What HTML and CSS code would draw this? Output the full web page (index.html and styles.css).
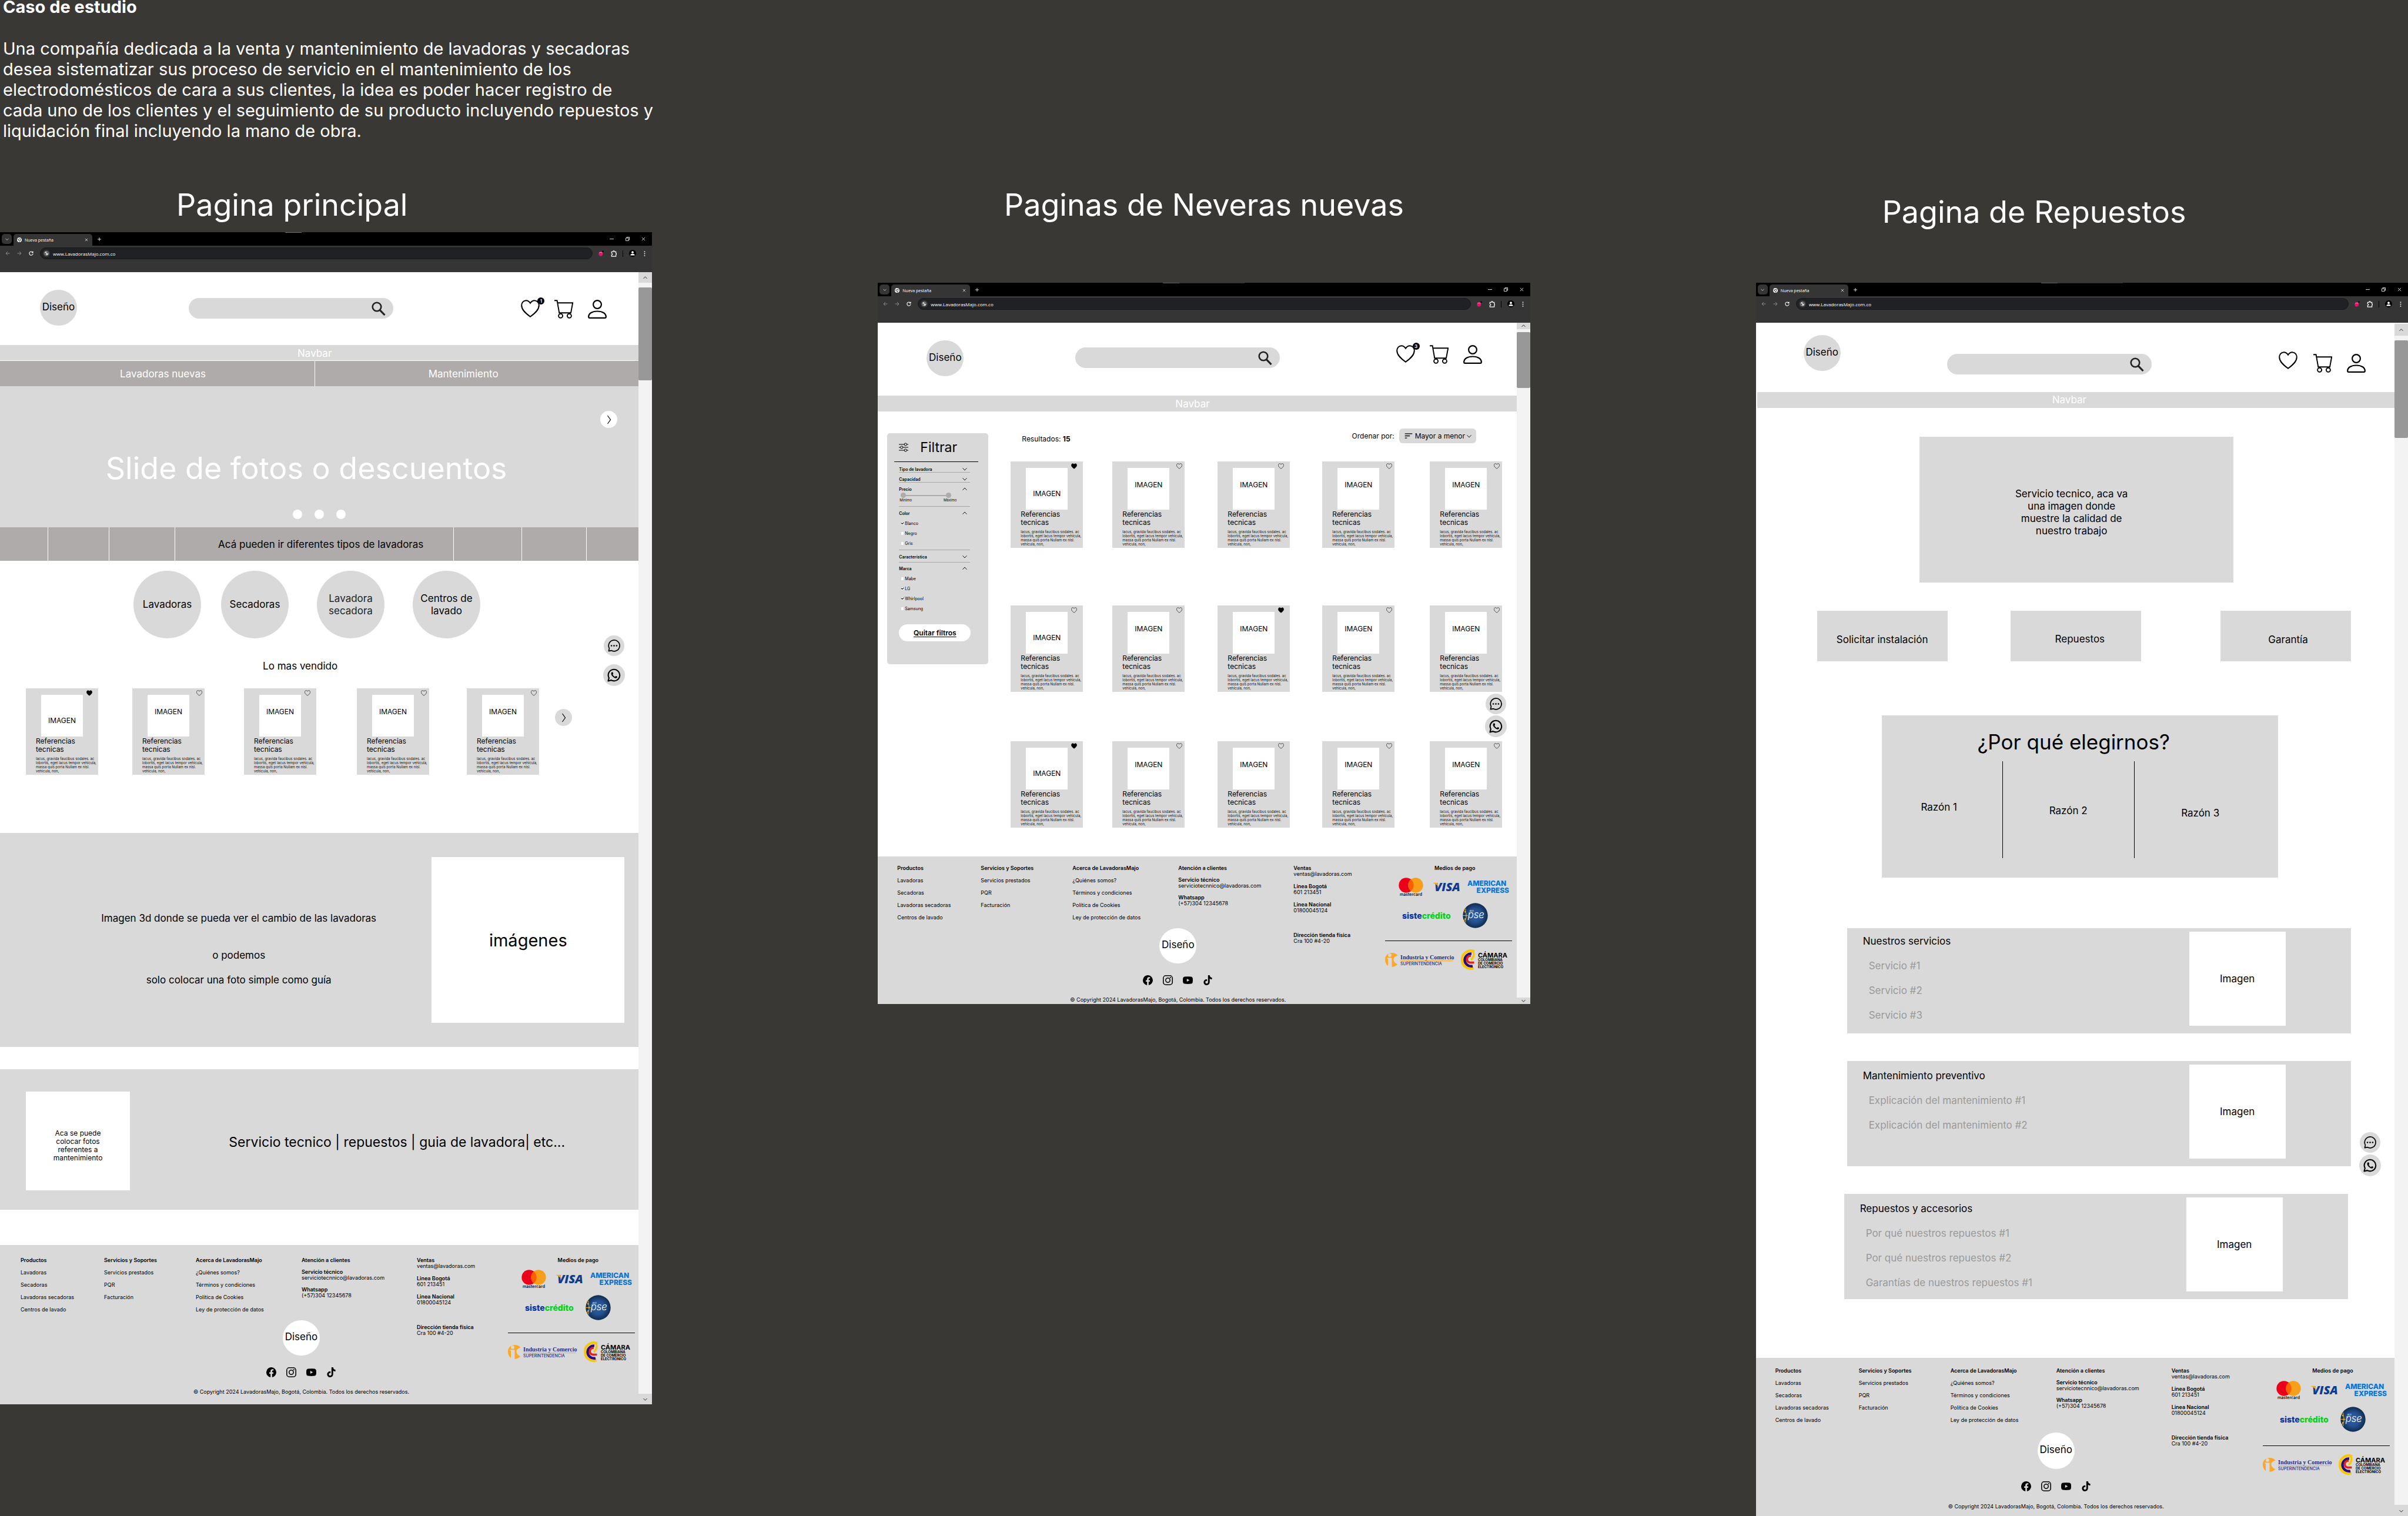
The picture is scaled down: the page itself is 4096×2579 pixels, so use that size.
FILE: index.html
```html
<!DOCTYPE html>
<html lang="es">
<head>
<meta charset="utf-8">
<title>LavadorasMajo - wireframes</title>
<link rel="stylesheet" href="styles.css">
</head>
<body>
<svg class="sprite" aria-hidden="true">
  <defs>
    <radialGradient id="pse-fill"><stop offset="0" stop-color="#2f62b5"/><stop offset="0.55" stop-color="#24508f"/><stop offset="1" stop-color="#0f2c4d"/></radialGradient>
  </defs>
  <symbol id="i-heart" viewBox="0 0 32 30"><path d="M16 5.6C14 2.6 11.6 1.2 8.9 1.2C4.5 1.2 1.2 4.9 1.2 9.6C1.2 17.2 8 23 16 28.8C24 23 30.8 17.2 30.8 9.6C30.8 4.9 27.500 1.2 23.100 1.2C20.400 1.2 18 2.6 16 5.6Z" stroke="currentColor" stroke-width="2"/></symbol>
  <symbol id="i-cart" viewBox="0 0 32 32"><path d="M0 1.300H4.600L8.300 22.200H28L31.200 5.300H5.600" fill="none" stroke="currentColor" stroke-width="1.900"/><circle cx="10.600" cy="27.300" r="3.500" fill="none" stroke="currentColor" stroke-width="1.900"/><circle cx="25.400" cy="27.300" r="3.500" fill="none" stroke="currentColor" stroke-width="1.900"/></symbol>
  <symbol id="i-user" viewBox="0 0 32 32"><circle cx="16" cy="8" r="6.900" fill="none" stroke="currentColor" stroke-width="2.200"/><path d="M1.200 29C1.200 23 7.500 19.500 16 19.500S30.800 23 30.800 29Q30.800 30.800 29 30.800H3Q1.200 30.800 1.200 29Z" fill="none" stroke="currentColor" stroke-width="2.200"/></symbol>
  <symbol id="i-search" viewBox="0 0 24 24"><circle cx="9" cy="9" r="7.300" fill="none" stroke="currentColor" stroke-width="2.600"/><path d="M13.800 14.200L22.500 23" stroke="currentColor" stroke-width="3.200"/></symbol>
  <symbol id="i-right" viewBox="0 0 16 16"><path d="M5.500 1L10.500 8L5.500 15" fill="none" stroke="currentColor" stroke-width="1.200"/></symbol>
  <symbol id="i-down" viewBox="0 0 16 16"><path d="M1 4.500L8 12L15 4.500" fill="none" stroke="currentColor" stroke-width="1.800"/></symbol>
  <symbol id="i-up" viewBox="0 0 16 16"><path d="M1 11.500L8 4L15 11.500" fill="none" stroke="currentColor" stroke-width="1.800"/></symbol>
  <symbol id="i-chat" viewBox="0 0 24 24"><path d="M2.500 21.500L3.600 16.600A9.800 9.800 0 1 1 7.600 20.500Z" fill="none" stroke="currentColor" stroke-width="1.800" stroke-linejoin="round"/><circle cx="7.400" cy="12" r="1.400"/><circle cx="12" cy="12" r="1.400"/><circle cx="16.600" cy="12" r="1.400"/></symbol>
  <symbol id="i-whatsapp" viewBox="0 0 24 24"><path d="M1.500 22.500L3 17A10.200 10.200 0 1 1 7 21Z" fill="none" stroke="currentColor" stroke-width="2.200" stroke-linejoin="round"/><path d="M8.600 6.600C8.100 6.600 6.800 7.500 6.800 9.300C6.800 11.200 8.300 13.200 9.700 14.600C11.400 16.300 13.500 17.400 15 17.400C16.700 17.400 17.800 16.200 17.800 15.100C17.800 14.700 15.600 13.500 15.200 13.600C14.800 13.700 14.200 15 13.800 15C13 15 9.900 12.300 9.700 11.200C9.700 10.800 10.600 10.200 10.600 9.700C10.600 9.100 9.900 6.700 9.300 6.600Z"/></symbol>
  <symbol id="i-filter" viewBox="0 0 16 16"><g fill="none" stroke="currentColor" stroke-width="1"><path d="M0 3H9M13.500 3H16M0 8H2.500M7 8H16M0 13H9M13.500 13H16"/><circle cx="11.300" cy="3" r="2.100"/><circle cx="4.700" cy="8" r="2.100"/><circle cx="11.300" cy="13" r="2.100"/></g></symbol>
  <symbol id="i-sort" viewBox="0 0 14 10"><path d="M0 1H14M0 5H9.500M0 9H4" stroke="currentColor" stroke-width="1.400"/></symbol>
  <symbol id="i-facebook" viewBox="0 0 24 24"><path d="M24 12A12 12 0 1 0 10.100 23.900V15.500H7.100V12H10.100V9.400C10.100 6.400 11.900 4.700 14.700 4.700C16 4.700 17.300 4.900 17.300 4.900V7.900H15.800C14.300 7.900 13.900 8.800 13.900 9.700V12H17.200L16.700 15.500H13.900V23.900A12 12 0 0 0 24 12Z"/></symbol>
  <symbol id="i-instagram" viewBox="0 0 24 24"><g fill="none" stroke="currentColor" stroke-width="2.200"><rect x="1.100" y="1.100" width="21.800" height="21.800" rx="6"/><circle cx="12" cy="12" r="5.200"/></g><circle cx="18.200" cy="5.800" r="1.500"/></symbol>
  <symbol id="i-youtube" viewBox="0 0 24 24"><path fill-rule="evenodd" d="M4 3.500Q12 2.500 20 3.500Q23.300 4 23.700 7.500Q24.200 12 23.700 16.500Q23.300 20 20 20.500Q12 21.500 4 20.500Q.7 20 .3 16.500Q-.2 12 .3 7.500Q.7 4 4 3.500ZM9.600 8.300V15.700L16 12Z"/></symbol>
  <symbol id="i-tiktok" viewBox="0 0 24 24"><path d="M12.500 0H16.500C16.800 3.300 18.900 5.600 22 5.900V9.900C19.900 9.900 18 9.200 16.500 8.100V16.300C16.500 21 13.300 24 9.200 24C5 24 2 20.800 2 16.900C2 12.500 5.600 9.500 10.200 9.900V14C8 13.500 6.100 14.800 6.100 16.900C6.100 18.700 7.500 20 9.200 20C11.200 20 12.500 18.700 12.500 16.500Z"/></symbol>
  <symbol id="i-chrome" viewBox="0 0 16 16"><circle cx="8" cy="8" r="8" fill="#fff"/><circle cx="8" cy="8" r="3.400" fill="#fff" stroke="#353535" stroke-width="1.600"/><path d="M8 4.200H15M4.700 9.900L1.400 4.200M11.300 9.900L7.800 16" stroke="#353535" stroke-width="1.300"/></symbol>
  <symbol id="i-globe" viewBox="0 0 16 16"><circle cx="8" cy="8" r="7" fill="#c7c7c7"/><path d="M2 6L6 8.500L6.500 14L2.500 11ZM9 2L13 4L14 8L10.500 7L8 5Z" fill="#3c3c3c"/></symbol>
  <symbol id="i-back" viewBox="0 0 16 16"><path d="M15 8H2M8 2L2 8L8 14" fill="none" stroke="currentColor" stroke-width="2"/></symbol>
  <symbol id="i-forward" viewBox="0 0 16 16"><path d="M1 8H14M8 2L14 8L8 14" fill="none" stroke="currentColor" stroke-width="2"/></symbol>
  <symbol id="i-reload" viewBox="0 0 16 16"><path d="M13.500 5A6.300 6.300 0 1 0 14.300 9M14 1V5.500H9.500" fill="none" stroke="currentColor" stroke-width="2.200"/></symbol>
  <symbol id="i-close" viewBox="0 0 16 16"><path d="M2 2L14 14M14 2L2 14" stroke="currentColor" stroke-width="1.800"/></symbol>
  <symbol id="i-plus" viewBox="0 0 16 16"><path d="M8 0V16M0 8H16" stroke="currentColor" stroke-width="2.200"/></symbol>
  <symbol id="i-minimize" viewBox="0 0 16 16"><path d="M0 8H16" stroke="currentColor" stroke-width="1.800"/></symbol>
  <symbol id="i-restore" viewBox="0 0 16 16"><path d="M1 4.500H11.500V15H1ZM4.500 4V1H15V11.500H12" fill="none" stroke="currentColor" stroke-width="1.900"/></symbol>
  <symbol id="i-puzzle" viewBox="0 0 16 18"><path d="M2 4H6Q6 1.200 8 1.200Q10 1.200 10 4H14V8Q15.500 8.200 15.500 10Q15.500 11.800 14 12V16.500H2V12.500Q4.500 12 4.500 10.200Q4.500 8.400 2 8Z" fill="none" stroke="currentColor" stroke-width="2"/></symbol>
  <symbol id="i-pink" viewBox="0 0 16 18"><path d="M7 4C11 3 13 6 13 10C13 15 10 17.500 6.500 17.500C2.500 17.500 0 14 .500 10C1 6.500 3.500 5 7 4Z" fill="#e0156b"/><path d="M2 8Q6 3.500 11 8" stroke="#f77fb2" stroke-width="2" fill="none"/><circle cx="13.500" cy="3" r="2.300" fill="#000"/></symbol>
  <symbol id="i-avatar" viewBox="0 0 16 16"><circle cx="8" cy="8" r="8" fill="#000"/><circle cx="8" cy="5.500" r="2.500" fill="#fff"/><path d="M3 12.500Q3 8.900 8 8.900T13 12.500Z" fill="#fff"/></symbol>
  <symbol id="i-dots" viewBox="0 0 4 16"><circle cx="2" cy="2" r="1.600"/><circle cx="2" cy="8" r="1.600"/><circle cx="2" cy="14" r="1.600"/></symbol>
</svg>

<template id="part-chrome">
  <div class="tabs">
    <button class="tab-search" aria-label="Buscar pestañas"><svg><use href="#i-down"/></svg></button>
    <div class="tab"><svg class="tab-icon"><use href="#i-chrome"/></svg><span>Nueva pestaña</span><button aria-label="Cerrar pestaña"><svg><use href="#i-close"/></svg></button></div>
    <button class="tab-new" aria-label="Nueva pestaña"><svg><use href="#i-plus"/></svg></button>
    <div class="window-buttons">
      <button aria-label="Minimizar"><svg><use href="#i-minimize"/></svg></button>
      <button aria-label="Restaurar"><svg><use href="#i-restore"/></svg></button>
      <button aria-label="Cerrar"><svg><use href="#i-close"/></svg></button>
    </div>
  </div>
  <div class="toolbar">
    <button class="nav-off" aria-label="Atrás"><svg><use href="#i-back"/></svg></button>
    <button class="nav-off" aria-label="Adelante"><svg><use href="#i-forward"/></svg></button>
    <button aria-label="Recargar"><svg><use href="#i-reload"/></svg></button>
    <div class="address"><span class="site"><svg><use href="#i-globe"/></svg></span><input type="text" value="www.LavadorasMajo.com.co" aria-label="Dirección"></div>
    <div class="extensions">
      <svg class="ext-pink"><use href="#i-pink"/></svg>
      <svg class="ext-puzzle"><use href="#i-puzzle"/></svg>
      <i></i>
      <svg class="ext-avatar"><use href="#i-avatar"/></svg>
      <svg class="ext-dots"><use href="#i-dots"/></svg>
    </div>
  </div>
</template>

<template id="part-header">
  <a class="logo" href="#">Diseño</a>
  <label class="search"><input type="search" aria-label="Buscar"><svg><use href="#i-search"/></svg></label>
  <nav class="account" aria-label="Cuenta">
    <a class="favorites" href="#" aria-label="Favoritos"><svg><use href="#i-heart"/></svg></a>
    <a href="#" aria-label="Carrito"><svg><use href="#i-cart"/></svg></a>
    <a href="#" aria-label="Perfil"><svg><use href="#i-user"/></svg></a>
  </nav>
</template>

<template id="part-scrollbar">
  <button aria-label="Subir"><svg><use href="#i-up"/></svg></button>
  <span class="thumb"></span>
  <button aria-label="Bajar"><svg><use href="#i-down"/></svg></button>
</template>

<template id="part-card">
  <button class="like" aria-label="Favorito"><svg><use href="#i-heart"/></svg></button>
  <div class="photo">IMAGEN</div>
  <h3>Referencias tecnicas</h3>
  <p>lacus, gravida faucibus sodales. ac lobortis, eget lacus tempor vehicula, massa quis porta Nullam ex nisl. vehicula, non,</p>
</template>

<template id="part-contact">
  <a class="chat" href="#" aria-label="Chat"><svg><use href="#i-chat"/></svg></a>
  <a class="whatsapp" href="#" aria-label="WhatsApp"><svg><use href="#i-whatsapp"/></svg></a>
</template>

<template id="part-footer">
  <ul><li><b>Productos</b></li><li><a href="#">Lavadoras</a></li><li><a href="#">Secadoras</a></li><li><a href="#">Lavadoras secadoras</a></li><li><a href="#">Centros de lavado</a></li></ul>
  <ul><li><b>Servicios y Soportes</b></li><li><a href="#">Servicios prestados</a></li><li><a href="#">PQR</a></li><li><a href="#">Facturación</a></li></ul>
  <ul><li><b>Acerca de LavadorasMajo</b></li><li><a href="#">¿Quiénes somos?</a></li><li><a href="#">Términos y condiciones</a></li><li><a href="#">Política de Cookies</a></li><li><a href="#">Ley de protección de datos</a></li></ul>
  <ul><li><b>Atención a clientes</b></li><li><b>Servicio técnico</b><br><a href="#">serviciotecnnico@lavadoras.com</a></li><li><b>Whatsapp</b><br>(+57)304 12345678</li></ul>
  <ul class="sales"><li><b>Ventas</b><br><a href="#">ventas@lavadoras.com</a></li><li><b>Linea Bogotá</b><br>601 213451</li><li><b>Linea Nacional</b><br>01800045124</li><li class="store"><b>Dirección tienda física</b><br>Cra 100 #4-20</li></ul>
  <div class="payments">
    <b>Medios de pago</b>
    <div class="pay-row cards">
      <svg class="mastercard" viewBox="0 0 42 32"><circle cx="13" cy="13" r="12.700" fill="#eb001b"/><circle cx="29" cy="13" r="12.700" fill="#f79e1b"/><path d="M21 3.100A12.700 12.700 0 0 1 21 22.900A12.700 12.700 0 0 1 21 3.100Z" fill="#ff5f00"/><text x="21" y="31" text-anchor="middle" font-size="7" font-weight="500">mastercard</text></svg>
      <svg class="visa" viewBox="0 0 46 16"><text x="2" y="15" class="visa-word" font-size="20" fill="#0e3b90">VISA</text><path d="M0 .800H5.500Q7.200 .800 7.600 2.500L9 8.500Q6 3 0 1.500Z" fill="#f2a81d"/></svg>
      <svg class="amex" viewBox="0 0 72 22"><text x="0" y="9" font-size="12" font-weight="800" fill="#0574d6">AMERICAN</text><text x="71" y="21" text-anchor="end" font-size="12" font-weight="800" fill="#0574d6">EXPRESS</text></svg>
    </div>
    <div class="pay-row">
      <svg class="siste" viewBox="0 0 88 16"><text x="0" y="13" font-size="14" font-weight="800" fill="#0b35a0">siste<tspan fill="#00d316">crédito</tspan></text></svg>
      <svg class="pse" viewBox="0 0 44 44"><circle cx="22" cy="22" r="21.700" fill="url(#pse-fill)"/><path d="M0 22H9M3 14L6 18V26L3 30M5 10V15M5 29V34" fill="none" stroke="#f2a81d" stroke-width="1"/><g fill="#f2b21d"><circle cx="4.500" cy="15.500" r="1.300"/><circle cx="4.500" cy="28" r="1.300"/><circle cx="2.500" cy="12" r="1"/><circle cx="2.500" cy="31" r="1"/><circle cx="6" cy="22" r="1.200"/></g><text x="12" y="15" font-size="4" font-style="italic" fill="#fff">ach</text><text x="9" y="27" font-size="17" font-style="italic" font-weight="300" fill="#fff">pse</text></svg>
    </div>
    <hr>
    <div class="endorsed">
      <svg class="industria" viewBox="0 0 117 24"><path d="M12 0C4 0 0 5 0 11C0 16 2 20 5 22V10H3.500V8.300H11.500V24C16 23.800 19 22 21 19.500C17 17 14.500 15 14.500 11C14.500 8 17 6 21.500 4.500C19.500 1.500 16 0 12 0ZM8 6.800A2.900 2.900 0 1 1 8 1A2.900 2.900 0 0 1 8 6.800Z" fill="#fba82a"/><text x="26" y="11" class="serif-word" font-size="10" fill="#2b2f86">Industria y Comercio</text><path d="M26 13.500H116" stroke="#fba82a" stroke-width="1"/><text x="26" y="21" font-size="7" font-weight="500" fill="#2b2f86">SUPERINTENDENCIA</text></svg>
      <svg class="camara" viewBox="0 0 75 32"><path d="M23 1.500A15 15 0 0 0 2 16A14.500 14.500 0 0 0 21.500 30" fill="none" stroke="#f9c606" stroke-width="4"/><path d="M21 2Q24 10 17 16" fill="none" stroke="#f9c606" stroke-width="3.500"/><path d="M18 5.500A11 11 0 0 0 6.500 16A11 11 0 0 0 20 26.500" fill="none" stroke="#2a0f72" stroke-width="4.500"/><path d="M17 9C12 9 10.500 12 10.500 15C10.500 19 13.500 21 18 20.500H22.500" fill="none" stroke="#e2231a" stroke-width="3.600"/><text x="29" y="12" font-size="11" font-weight="700">CÁMARA</text><text x="29" y="18" font-size="6" font-weight="700">COLOMBIANA</text><text x="29" y="24" font-size="6" font-weight="700">DE COMERCIO</text><text x="29" y="30" font-size="6" font-weight="700">ELECTRÓNICO</text></svg>
    </div>
  </div>
  <div class="brand">
    <a class="logo" href="#">Diseño</a>
    <div class="social">
      <a href="#" aria-label="Facebook"><svg><use href="#i-facebook"/></svg></a>
      <a href="#" aria-label="Instagram"><svg><use href="#i-instagram"/></svg></a>
      <a href="#" aria-label="YouTube"><svg><use href="#i-youtube"/></svg></a>
      <a href="#" aria-label="TikTok"><svg><use href="#i-tiktok"/></svg></a>
    </div>
    <small>© Copyright 2024 LavadorasMajo, Bogotá, Colombia. Todos los derechos reservados.</small>
  </div>
</template>

<main class="board">
  <section class="column home">
    <div class="intro">
      <h1>Caso de estudio</h1>
      <p>Una compañía dedicada a la venta y mantenimiento de lavadoras y secadoras<br>desea sistematizar sus proceso de servicio en el mantenimiento de los<br>electrodomésticos de cara a sus clientes, la idea es poder hacer registro de<br>cada uno de los clientes y el seguimiento de su producto incluyendo repuestos y<br>liquidación final incluyendo la mano de obra.</p>
    </div>
    <h2>Pagina principal</h2>
    <article class="frame">
      <div class="chrome" data-part="chrome"></div>
      <div class="viewport">
        <div class="page">
          <header data-part="header" data-count="1"></header>
          <div class="navbar">Navbar</div>
          <nav class="submenu"><a href="#">Lavadoras nuevas</a><a href="#">Mantenimiento</a></nav>
          <section class="slide">
            <h3>Slide de fotos o descuentos</h3>
            <div class="dots"><i></i><i></i><i></i></div>
            <button class="arrow" aria-label="Siguiente"><svg><use href="#i-right"/></svg></button>
          </section>
          <div class="types"><span></span><span></span><span></span><span>Acá pueden ir diferentes tipos de lavadoras</span><span></span><span></span><span></span></div>
          <nav class="categories"><a href="#">Lavadoras</a><a href="#">Secadoras</a><a href="#" class="soft">Lavadora secadora</a><a href="#">Centros de lavado</a></nav>
          <section class="best">
            <h3>Lo mas vendido</h3>
            <ul class="shelf">
              <li class="card liked"></li><li class="card"></li><li class="card"></li><li class="card"></li><li class="card"></li>
              <li class="more"><button class="arrow" aria-label="Ver más"><svg><use href="#i-right"/></svg></button></li>
            </ul>
          </section>
          <section class="showcase">
            <div class="showcase-text"><p>Imagen 3d donde se pueda ver el cambio de las lavadoras</p><p>o podemos</p><p>solo colocar una foto simple como guía</p></div>
            <div class="showcase-photo">imágenes</div>
          </section>
          <section class="service">
            <div class="service-photo">Aca se puede colocar fotos referentes a mantenimiento</div>
            <p>Servicio tecnico | repuestos | guia de lavadora| etc...</p>
          </section>
          <footer data-part="footer"></footer>
        </div>
        <div class="scrollbar" data-part="scrollbar"></div>
        <aside class="contact" data-part="contact"></aside>
      </div>
    </article>
  </section>

  <section class="column catalog">
    <h2>Paginas de Neveras nuevas</h2>
    <article class="frame">
      <div class="chrome" data-part="chrome"></div>
      <div class="viewport">
        <div class="page">
          <header data-part="header" data-count="3"></header>
          <div class="navbar">Navbar</div>
          <div class="listing">
            <form class="filters">
              <h3><svg><use href="#i-filter"/></svg>Filtrar</h3>
              <section><h4>Tipo de lavadora<svg><use href="#i-down"/></svg></h4></section>
              <section><h4>Capacidad<svg><use href="#i-down"/></svg></h4></section>
              <section class="open"><h4>Precio<svg><use href="#i-up"/></svg></h4>
                <div class="range"><input type="range" value="0" aria-label="Precio mínimo"><input type="range" value="100" aria-label="Precio máximo"></div>
                <div class="range-labels"><span>Mínimo</span><span>Máximo</span></div>
              </section>
              <section class="open"><h4>Color<svg><use href="#i-up"/></svg></h4>
                <label><input type="checkbox" checked>Blanco</label><label><input type="checkbox">Negro</label><label><input type="checkbox">Gris</label>
              </section>
              <section class="feature"><h4>Característica<svg><use href="#i-down"/></svg></h4></section>
              <section class="brands"><h4>Marca<svg><use href="#i-up"/></svg></h4>
                <label><input type="checkbox">Mabe</label><label><input type="checkbox" checked>LG</label><label><input type="checkbox" checked>Whirlpool</label><label><input type="checkbox">Samsung</label>
              </section>
              <button type="reset">Quitar filtros</button>
            </form>
            <div class="results">
              <div class="results-bar">
                <p>Resultados: <b>15</b></p>
                <label class="order">Ordenar por:
                  <span class="order-box"><svg class="order-sort"><use href="#i-sort"/></svg><select><option>Mayor a menor</option><option>Menor a mayor</option></select><svg class="order-down"><use href="#i-down"/></svg></span>
                </label>
              </div>
              <ul class="shelf"><li class="card liked"></li><li class="card"></li><li class="card"></li><li class="card"></li><li class="card"></li></ul>
              <ul class="shelf"><li class="card"></li><li class="card"></li><li class="card liked"></li><li class="card"></li><li class="card"></li></ul>
              <ul class="shelf"><li class="card liked"></li><li class="card"></li><li class="card"></li><li class="card"></li><li class="card"></li></ul>
            </div>
          </div>
          <footer data-part="footer"></footer>
        </div>
        <div class="scrollbar" data-part="scrollbar"></div>
        <aside class="contact" data-part="contact"></aside>
      </div>
    </article>
  </section>

  <section class="column parts">
    <h2>Pagina de Repuestos</h2>
    <article class="frame">
      <div class="chrome" data-part="chrome"></div>
      <div class="viewport">
        <div class="page">
          <header data-part="header"></header>
          <div class="navbar">Navbar</div>
          <div class="hero"><p>Servicio tecnico, aca va una imagen donde muestre la calidad de nuestro trabajo</p></div>
          <nav class="options"><a href="#">Solicitar instalación</a><a href="#">Repuestos</a><a href="#">Garantía</a></nav>
          <section class="reasons">
            <h3>¿Por qué elegirnos?</h3>
            <ul><li>Razón 1</li><li>Razón 2</li><li>Razón 3</li></ul>
          </section>
          <section class="panel first"><div><h3>Nuestros servicios</h3><ul><li>Servicio #1</li><li>Servicio #2</li><li>Servicio #3</li></ul></div><div class="panel-photo">Imagen</div></section>
          <section class="panel"><div><h3>Mantenimiento preventivo</h3><ul><li>Explicación del mantenimiento #1</li><li>Explicación del mantenimiento #2</li></ul></div><div class="panel-photo">Imagen</div></section>
          <section class="panel last"><div><h3>Repuestos y accesorios</h3><ul><li>Por qué nuestros repuestos #1</li><li>Por qué nuestros repuestos #2</li><li>Garantías de nuestros repuestos #1</li></ul></div><div class="panel-photo">Imagen</div></section>
          <footer data-part="footer"></footer>
        </div>
        <div class="scrollbar" data-part="scrollbar"></div>
        <aside class="contact" data-part="contact"></aside>
      </div>
    </article>
  </section>
</main>
<script src="script.js"></script>
</body>
</html>
```
FILE: styles.css
```css
* { box-sizing: border-box; }
body { margin: 0; background: #3a3835; color: #000; font: 17px/21px Inter, "Open Sans", sans-serif; overflow-x: hidden; }
h1, h2, h3, h4, p, ul { margin: 0; padding: 0; font-size: inherit; font-weight: 400; }
ul { list-style: none; }
a { color: inherit; text-decoration: none; }
button { border: 0; padding: 0; background: none; color: inherit; font: inherit; display: flex; align-items: center; justify-content: center; }
svg { display: block; fill: currentColor; overflow: visible; flex: none; }
.sprite { position: absolute; width: 0; height: 0; }

/* Board: three mock-ups side by side */
.board { display: grid; grid-template-columns: repeat(3, 1fr); column-gap: 384px; align-items: start; }
.column > h2 { color: #fff; font-size: 52px; line-height: 63px; }
.home > h2 { padding-left: 300px; margin: 77px 0 15px; }
.catalog > h2 { text-align: center; margin: 317px 0 101px; }
.parts > h2 { padding-left: 215px; margin: 329px 0 89px; }
.intro { color: #fff; font-size: 29px; line-height: 35px; margin-right: -16px; padding-left: 5px; }
.intro h1 { line-height: 23px; font-weight: 700; margin-bottom: 42px; }

/* Browser window */
.tabs { display: flex; align-items: center; height: 23px; padding-left: 3px; background: linear-gradient(#0f6fc0, #0f6fc0) 485px 0 / 28px 1px no-repeat, linear-gradient(#2e2e2e, #2e2e2e) 513px 0 / 111px 1px no-repeat, #000; color: #fff; }
.home .tabs { background: linear-gradient(#6e6e6e, #6e6e6e) 485px 0 / 28px 1px no-repeat, #000; }
.tabs svg { width: 6px; height: 6px; }
.tab-search { width: 17px; height: 17px; border-radius: 5px; background: #353535; }
.tab { align-self: flex-end; display: flex; align-items: center; width: 134px; height: 20px; margin-left: 3px; padding: 0 7px 0 6px; border-radius: 5px 5px 0 0; background: #353535; font: 7px/9px "Open Sans", "Noto Sans", sans-serif; }
.tab .tab-icon { width: 8px; height: 8px; margin-right: 5px; }
.tab button { margin-left: auto; }
.tab-new { margin-left: 9px; }
.window-buttons { display: flex; gap: 20px; margin-left: auto; padding-right: 11px; }
.tabs .window-buttons svg { width: 7px; height: 7px; }
.toolbar { display: flex; align-items: flex-start; height: 45px; padding: 3px 11px 0 9px; background: #353535; color: #fff; }
.toolbar > button { height: 20px; margin-right: 12px; }
.toolbar > button svg { width: 8px; height: 8px; }
.toolbar > .nav-off { color: #8c8c8c; }
.address { flex: 1; display: flex; align-items: center; height: 20px; margin-left: -1px; padding-left: 4px; border: 1px solid #17181a; border-radius: 10px; background: #202124; }
.site { display: grid; place-items: center; width: 12px; height: 12px; margin-right: 5px; border-radius: 6px; background: #3c3c3c; }
.site svg { width: 8px; height: 8px; }
.address input { flex: 1; min-width: 0; height: 14px; padding: 0; border: 0; background: none; color: #fff; font: 8px/12px "Open Sans", "Noto Sans", sans-serif; }
.extensions { display: flex; align-items: center; height: 20px; padding-left: 10px; }
.ext-pink { width: 9px; height: 10px; margin-right: 12px; }
.ext-puzzle { width: 10px; height: 11px; margin-right: 10px; }
.extensions i { width: 1px; height: 11px; margin-right: 10px; background: #000; }
.ext-avatar { width: 12px; height: 12px; margin-right: 13px; }
.ext-dots { width: 3px; height: 9px; }
.viewport { display: grid; grid-template-columns: 1fr 23px; position: relative; background: #fff; }
.page { display: flex; flex-direction: column; min-width: 0; }
.scrollbar { display: flex; flex-direction: column; background: #f3f3f3; }
.scrollbar button { height: 18px; background: #d9d9d9; }
.scrollbar svg { width: 7px; height: 7px; }
.scrollbar button:last-child { margin-top: auto; }
.thumb { height: 158px; margin-top: 8px; border-radius: 2px; background: #989898; }
.catalog .scrollbar button { height: 11px; }
.catalog .thumb { height: 95px; margin-top: 5px; }
.parts .scrollbar { padding-top: 2px; }
.parts .scrollbar button { height: 20px; }
.parts .thumb { height: 166px; margin-top: 8px; }

/* Page header */
header { display: flex; align-items: flex-start; height: 124px; padding: 30px 54px 0 68px; }
.logo { display: flex; align-items: center; justify-content: center; width: 63px; height: 61px; padding-bottom: 3px; border-radius: 50%; background: #d9d9d9; }
.search { display: flex; align-items: center; justify-content: flex-end; width: 348px; height: 35px; margin: 14px 0 0 190px; padding-right: 13px; border-radius: 18px; background: #d9d9d9; color: #222; }
.search input { flex: 1; min-width: 0; border: 0; background: none; outline: 0; font: inherit; padding-left: 18px; }
.search svg { width: 24px; height: 24px; }
.account { display: flex; gap: 25px; margin: 17px 0 0 auto; }
.account svg { width: 32px; height: 32px; }
.favorites { position: relative; }
.favorites svg { height: 30px; fill: none; }
.badge { position: absolute; top: -4px; right: -8px; width: 12px; height: 12px; border-radius: 6px; background: #000; color: #fff; font-size: 8px; line-height: 12px; font-weight: 600; text-align: center; }
.catalog header { padding: 30px 59px 0 83px; }
.catalog .search { margin-top: 12px; }
.catalog .account { margin-top: 8px; }
.parts header { height: 118px; padding: 21px 49px 0 81px; }
.parts .search { margin: 32px 0 0 181px; }
.parts .account { margin-top: 32px; }
.parts .favorites { margin: -4px 2px 0 -2px; }
.navbar { height: 27px; line-height: 28px; padding-right: 16px; background: #d9d9d9; color: #fff; text-align: center; }
.home .navbar { border-bottom: 1px solid #fff; }
.parts .navbar { margin-left: 2px; padding-right: 22px; line-height: 26px; }

/* Home */
.submenu { display: grid; grid-template-columns: 536px 1fr; height: 43px; line-height: 44px; color: #fff; background: #afabaa; text-align: center; }
.submenu a:first-child { border-right: 1px solid #fff; padding-left: 19px; }
.submenu a:last-child { padding-right: 46px; }
.slide { position: relative; height: 240px; padding-top: 108px; background: #d9d9d9; color: #fff; text-align: center; }
.slide h3 { padding-right: 44px; font-size: 52px; line-height: 63px; }
.dots { display: flex; justify-content: center; gap: 21px; margin-top: 39px; }
.dots i { width: 16px; height: 16px; border-radius: 8px; background: #fff; }
.arrow { width: 29px; height: 29px; border-radius: 15px; background: #d9d9d9; }
.arrow svg { width: 16px; height: 16px; }
.slide .arrow { position: absolute; top: 42px; right: 36px; background: #fff; color: #000; }
.types { display: grid; grid-template-columns: 82px 104px 112px 1fr 116px 110px 88px; height: 57px; line-height: 59px; background: #afabaa; text-align: center; }
.types span { height: 57px; border-right: 1px solid #fff; }
.types span:last-child { border: 0; }
.types span:nth-child(4) { padding-left: 22px; }
.categories { display: grid; grid-template-columns: 149px 163px 163px 115px; padding: 17px 0 0 227px; }
.categories a { display: flex; align-items: center; width: 115px; height: 115px; padding: 0 8px; justify-content: center; border-radius: 50%; background: #d9d9d9; text-align: center; }
.categories .soft { color: #222; }
.best h3 { margin: 37px 0 27px; padding-right: 65px; text-align: center; }
.shelf { display: grid; grid-template-columns: 181px 190px 192px 187px 150px 1fr; }
.best .shelf { padding: 0 0 99px 44px; }
.more { padding-top: 35px; }
.card { position: relative; width: 123px; height: 147px; padding: 11px 0 0 17px; background: #d9d9d9; }
.photo { width: 71px; height: 71px; margin-left: 9px; padding-top: 22px; background: #fff; font-size: 12px; line-height: 14px; text-align: center; }
.card:first-child .photo { padding-top: 37px; }
.card h3 { width: 80px; margin: 1px 0 5px; padding: 0; font-size: 12px; line-height: 14px; text-align: left; }
.card p { font-size: 6px; line-height: 7px; color: #111; }
.like { position: absolute; top: 3px; left: 109px; }
.card:nth-child(odd) .like { left: 103px; }
.card:nth-child(5) .like { left: 109px; }
.like svg { width: 10px; height: 10px; fill: none; }
.liked .like svg { fill: #000; }
.showcase { display: flex; align-items: center; height: 364px; padding: 0 24px 0 78px; background: #d9d9d9; text-align: center; }
.showcase-text { flex: 1; padding-top: 52px; }
.showcase-text p { margin-bottom: 21px; }
.showcase-text p:first-child { margin-bottom: 42px; }
.showcase-photo { display: grid; place-items: center; width: 328px; height: 282px; background: #fff; font-size: 29px; line-height: 35px; }
.service { display: flex; align-items: center; height: 239px; margin: 38px 0 60px; padding: 5px 0 0 44px; background: #d9d9d9; }
.service-photo { display: grid; place-items: center; width: 177px; height: 168px; padding: 16px 40px 0; background: #fff; font-size: 12px; line-height: 14px; text-align: center; }
.service > p { flex: 1; padding: 3px 0 0 43px; font-size: 23px; line-height: 28px; text-align: center; }

/* Catalogue */
.listing { display: flex; align-items: flex-start; gap: 38px; padding: 29px 0 49px 16px; }
.filters { width: 172px; height: 393px; margin-top: 8px; padding: 10px 17px 0 12px; border-radius: 5px; background: #d9d9d9; }
.filters h3 { display: flex; align-items: center; gap: 20px; padding: 0 0 10px 8px; border-bottom: 1px solid #000; font-size: 23px; line-height: 28px; }
.filters h3 svg { width: 16px; height: 16px; }
.filters section { margin: 0 14px 0 8px; padding-top: 7px; border-bottom: 1px solid #a6a6a6; font-size: 7px; line-height: 9px; }
.filters h3 + section { padding-top: 8px; }
.filters h4 { display: flex; justify-content: space-between; font-size: 7px; font-weight: 600; }
.filters h4 svg { width: 8px; height: 8px; margin-right: 5px; }
.filters section.open { padding-bottom: 6px; }
.filters section.feature { padding-bottom: 4px; }
.filters section.brands { padding-top: 6px; border: 0; }
.range { display: grid; width: 86px; height: 9px; margin: 1px 0 0 3px; }
.range input { grid-area: 1 / 1; appearance: none; width: 100%; height: 9px; margin: 0; background: linear-gradient(#afabaa, #afabaa) center / 100% 2px no-repeat; }
.range input + input { background: none; pointer-events: none; }
.range input::-webkit-slider-thumb { appearance: none; width: 9px; height: 9px; border-radius: 5px; background: #afabaa; pointer-events: auto; }
.range-labels { display: flex; justify-content: space-between; width: 98px; padding-left: 1px; font-size: 6px; line-height: 8px; }
.filters label { display: flex; align-items: center; margin-top: 8px; padding-left: 4px; }
.filters label input { appearance: none; display: grid; place-items: start center; width: 4px; height: 5px; margin: 0 2px 0 0; border-radius: 1px; background: #fff; }
.filters label input:checked::after { content: ""; width: 3px; height: 2px; border: solid #000; border-width: 0 0 1px 1px; transform: rotate(-45deg); }
.filters > button { width: 122px; height: 29px; margin: 22px 0 0 8px; border-radius: 15px; background: #fff; font-size: 12px; line-height: 14px; font-weight: 600; text-decoration: underline; text-underline-offset: 2px; }
.results { flex: 1; }
.results-bar { display: flex; justify-content: space-between; align-items: flex-end; height: 25px; margin-bottom: 31px; padding: 0 69px 0 19px; font-size: 12px; line-height: 15px; }
.results-bar b { font-weight: 700; }
.order { display: flex; align-items: center; gap: 8px; }
.order-box { position: relative; display: flex; align-items: center; width: 131px; height: 25px; border-radius: 6px; background: #d9d9d9; }
.order select { appearance: none; width: 131px; height: 25px; padding: 0 16px 0 27px; border: 0; background: none; color: #000; font: inherit; }
.order-sort { position: absolute; left: 9px; width: 14px; height: 9px; }
.order-down { position: absolute; right: 8px; width: 8px; height: 8px; }
.results .shelf { grid-template-columns: 173px 179px 178px 183px 1fr; margin-bottom: 98px; }
.results .shelf + .shelf { margin-bottom: 84px; }
.results .shelf:last-child { margin-bottom: 0; }

/* Spare parts */
.hero { width: 534px; height: 248px; margin: 49px 0 48px 278px; padding: 87px 175px 0 159px; background: #d9d9d9; text-align: center; }
.options { display: flex; justify-content: space-between; padding: 0 74px 0 104px; }
.options a { width: 222px; height: 86px; padding-top: 39px; background: #d9d9d9; text-align: center; }
.options a:nth-child(2) { margin-right: 27px; padding: 38px 0 0 13px; }
.options a:nth-child(3) { padding-left: 8px; }
.reasons { width: 674px; height: 276px; margin: 92px 0 86px 214px; padding-top: 24px; background: #d9d9d9; text-align: center; }
.reasons h3 { padding-right: 21px; font-size: 35px; line-height: 42px; }
.reasons ul { display: grid; grid-template-columns: 206px 224px 244px; height: 165px; margin-top: 12px; }
.reasons li { display: grid; place-items: center; padding: 4px 0 0; border-right: 1px solid #000; }
.reasons li:first-child { padding: 0 10px 8px 0; }
.reasons li:last-child { padding: 12px 20px 0 0; border: 0; }
.panel { display: flex; justify-content: space-between; align-items: flex-start; width: 857px; height: 179px; margin: 0 0 47px 155px; padding: 6px 111px 0 27px; background: #d9d9d9; }
.panel h3 { margin-top: 9px; }
.panel.first h3 { margin-top: 6px; }
.panel.last { margin: 0 0 100px 150px; }
.panel li { margin: 21px 0 0 10px; color: #999; }
.panel-photo { display: grid; place-items: center; width: 164px; height: 160px; background: #fff; }

/* Floating contact buttons */
.contact { position: absolute; right: 46px; top: 618px; display: flex; flex-direction: column; align-items: center; gap: 14px; }
.contact a { display: grid; place-items: center; border-radius: 50%; background: #d9d9d9; }
.contact .chat { width: 35px; height: 35px; }
.contact .whatsapp { width: 37px; height: 37px; }
.contact svg { width: 23px; height: 23px; }
.catalog .contact { right: 40px; top: 631px; gap: 2px; }
.parts .contact { top: 1377px; gap: 3px; }

/* Footer */
footer { display: grid; grid-template-columns: 142px 156px 180px 196px 1fr 222px; grid-template-rows: auto auto; row-gap: 13px; padding: 20px 0 16px 35px; background: #d9d9d9; font-size: 9px; line-height: 11px; }
footer li + li { margin-top: 10px; }
footer b { font-weight: 600; }
footer ul:nth-child(4) { line-height: 10px; padding-top: 1px; }
.sales { grid-row: 1 / 3; grid-column: 5; line-height: 10px; padding-top: 1px; }
footer .sales li + li { margin-top: 11px; }
footer .sales .store { margin-top: 32px; }
.payments { grid-row: 1 / 3; grid-column: 6; padding-right: 6px; }
.payments > b { display: block; padding-left: 22px; text-align: center; }
.pay-row { display: flex; align-items: center; gap: 15px; margin: 11px 0 0 29px; }
.pay-row.cards { gap: 12px; margin-left: 23px; }
.mastercard { width: 42px; height: 32px; }
.visa { width: 46px; height: 16px; margin-left: 5px; }
.amex { width: 72px; height: 22px; }
.siste { width: 88px; height: 16px; }
.pse { width: 43px; height: 43px; }
.payments hr { margin: 21px 0 16px; border: 0; border-top: 1px solid #000; }
.endorsed { display: flex; align-items: center; gap: 12px; }
.industria { width: 117px; height: 24px; }
.camara { width: 75px; height: 32px; }
.visa-word { font-family: "Open Sans", sans-serif; font-weight: 800; font-style: italic; }
.serif-word { font-family: "Liberation Serif", serif; font-weight: 700; }
.brand { grid-row: 2; grid-column: 3 / 5; display: flex; flex-direction: column; align-items: center; padding-right: 17px; }
.brand .logo { background: #fff; font-size: 17px; line-height: 21px; height: 60px; }
.social { display: flex; gap: 17px; margin: 20px 0 19px; }
.social svg { width: 17px; height: 17px; }
.brand small { font-size: 9px; white-space: nowrap; }
.catalog footer { grid-template-columns: 142px 156px 180px 196px 1fr 224px; padding: 14px 0 2px 33px; }
.parts footer { grid-template-columns: 142px 156px 180px 196px 1fr 224px; padding: 16px 0 12px 33px; row-gap: 16px; }
.catalog .payments, .parts .payments { padding-right: 8px; }
.parts .pay-row { margin-top: 12px; }
.parts .payments hr { margin-top: 23px; }
.parts .brand .logo { height: 62px; }
.parts .social { margin: 21px 0 20px; }
```
FILE: script.js
```js
// Fill every repeated piece of the mock-ups from its template.
const fill = (target, name) =>
  target.append(document.getElementById('part-' + name).content.cloneNode(true));

document.querySelectorAll('[data-part]').forEach(el => fill(el, el.dataset.part));
document.querySelectorAll('.card').forEach(el => fill(el, 'card'));

// Favourites counter
document.querySelectorAll('header[data-count]').forEach(el => {
  const badge = document.createElement('span');
  badge.className = 'badge';
  badge.textContent = el.dataset.count;
  el.querySelector('.favorites').append(badge);
});
```
